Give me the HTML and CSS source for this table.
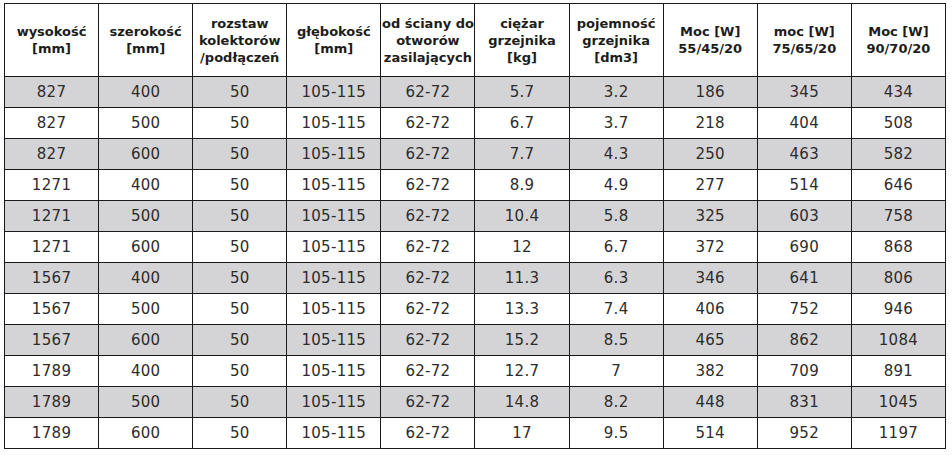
FILE: index.html
```html
<!DOCTYPE html>
<html lang="pl">
<head>
<meta charset="utf-8">
<title>Tabela grzejników</title>
<link rel="stylesheet" href="styles.css">
</head>
<body>
<table class="spec">
  <colgroup>
    <col class="c"><col class="c"><col class="c"><col class="c"><col class="c">
    <col class="c"><col class="c"><col class="c"><col class="c"><col class="c">
  </colgroup>
  <thead>
    <tr class="head">
      <th>wysokość<br>[mm]</th>
      <th>szerokość<br>[mm]</th>
      <th>rozstaw<br>kolektorów<br>/podłączeń</th>
      <th>głębokość<br>[mm]</th>
      <th>od ściany do<br>otworów<br>zasilających</th>
      <th>ciężar<br>grzejnika<br>[kg]</th>
      <th>pojemność<br>grzejnika<br>[dm3]</th>
      <th>Moc [W]<br>55/45/20</th>
      <th>moc [W]<br>75/65/20</th>
      <th>Moc [W]<br>90/70/20</th>
    </tr>
  </thead>
  <tbody>
    <tr class="shade"><td>827</td><td>400</td><td>50</td><td>105-115</td><td>62-72</td><td>5.7</td><td>3.2</td><td>186</td><td>345</td><td>434</td></tr>
    <tr><td>827</td><td>500</td><td>50</td><td>105-115</td><td>62-72</td><td>6.7</td><td>3.7</td><td>218</td><td>404</td><td>508</td></tr>
    <tr class="shade"><td>827</td><td>600</td><td>50</td><td>105-115</td><td>62-72</td><td>7.7</td><td>4.3</td><td>250</td><td>463</td><td>582</td></tr>
    <tr><td>1271</td><td>400</td><td>50</td><td>105-115</td><td>62-72</td><td>8.9</td><td>4.9</td><td>277</td><td>514</td><td>646</td></tr>
    <tr class="shade"><td>1271</td><td>500</td><td>50</td><td>105-115</td><td>62-72</td><td>10.4</td><td>5.8</td><td>325</td><td>603</td><td>758</td></tr>
    <tr><td>1271</td><td>600</td><td>50</td><td>105-115</td><td>62-72</td><td>12</td><td>6.7</td><td>372</td><td>690</td><td>868</td></tr>
    <tr class="shade"><td>1567</td><td>400</td><td>50</td><td>105-115</td><td>62-72</td><td>11.3</td><td>6.3</td><td>346</td><td>641</td><td>806</td></tr>
    <tr><td>1567</td><td>500</td><td>50</td><td>105-115</td><td>62-72</td><td>13.3</td><td>7.4</td><td>406</td><td>752</td><td>946</td></tr>
    <tr class="shade"><td>1567</td><td>600</td><td>50</td><td>105-115</td><td>62-72</td><td>15.2</td><td>8.5</td><td>465</td><td>862</td><td>1084</td></tr>
    <tr><td>1789</td><td>400</td><td>50</td><td>105-115</td><td>62-72</td><td>12.7</td><td>7</td><td>382</td><td>709</td><td>891</td></tr>
    <tr class="shade"><td>1789</td><td>500</td><td>50</td><td>105-115</td><td>62-72</td><td>14.8</td><td>8.2</td><td>448</td><td>831</td><td>1045</td></tr>
    <tr><td>1789</td><td>600</td><td>50</td><td>105-115</td><td>62-72</td><td>17</td><td>9.5</td><td>514</td><td>952</td><td>1197</td></tr>
  </tbody>
</table>
</body>
</html>
```

FILE: styles.css
```css
html, body {
  margin: 0;
  padding: 0;
  background: #ffffff;
}

body {
  padding: 3px 0 0 4px;
  font-family: "DejaVu Sans", "Liberation Sans", sans-serif;
}

.spec {
  border-collapse: collapse;
  table-layout: fixed;
  width: 942px;
  border: 1px solid #1a1a1a;
}

.spec .c {
  width: 10%;
}

.spec th,
.spec td {
  border: 1px solid #1a1a1a;
  padding: 0;
  text-align: center;
  vertical-align: middle;
  white-space: nowrap;
  overflow: hidden;
}

.spec th {
  height: 72px;
  font-size: 13px;
  font-weight: bold;
  line-height: 17px;
  color: #1d1d1b;
  background: #ffffff;
}

.spec td {
  height: 30px;
  font-size: 15px;
  font-weight: normal;
  color: #2e2b2b;
  letter-spacing: 0.3px;
  background: #ffffff;
}

.spec tr.shade td {
  background: #d4d4d6;
}
```
